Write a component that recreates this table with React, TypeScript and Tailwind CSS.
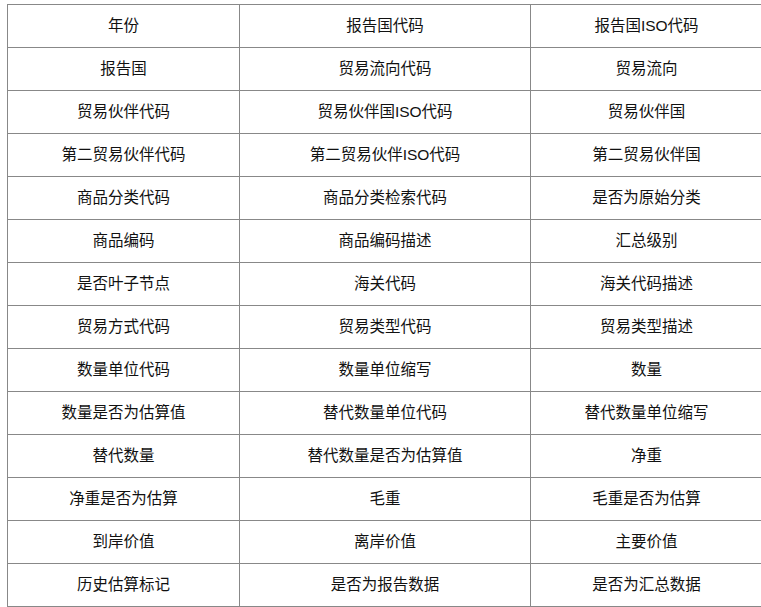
import React from "react";

const rows: string[][] = [
  ["年份", "报告国代码", "报告国ISO代码"],
  ["报告国", "贸易流向代码", "贸易流向"],
  ["贸易伙伴代码", "贸易伙伴国ISO代码", "贸易伙伴国"],
  ["第二贸易伙伴代码", "第二贸易伙伴ISO代码", "第二贸易伙伴国"],
  ["商品分类代码", "商品分类检索代码", "是否为原始分类"],
  ["商品编码", "商品编码描述", "汇总级别"],
  ["是否叶子节点", "海关代码", "海关代码描述"],
  ["贸易方式代码", "贸易类型代码", "贸易类型描述"],
  ["数量单位代码", "数量单位缩写", "数量"],
  ["数量是否为估算值", "替代数量单位代码", "替代数量单位缩写"],
  ["替代数量", "替代数量是否为估算值", "净重"],
  ["净重是否为估算", "毛重", "毛重是否为估算"],
  ["到岸价值", "离岸价值", "主要价值"],
  ["历史估算标记", "是否为报告数据", "是否为汇总数据"],
];

export default function App() {
  return (
    <div className="bg-white w-[761px] h-[607px] overflow-hidden pt-[4px] pl-[7px]">
      <table
        className="border-collapse table-fixed w-[755px] text-[15.5px] text-[#111]"
        style={{ fontFamily: '"Liberation Sans", "Noto Sans CJK SC", sans-serif' }}
      >
        <colgroup>
          <col className="w-[232px]" />
          <col className="w-[291px]" />
          <col className="w-[232px]" />
        </colgroup>
        <tbody>
          {rows.map((r, i) => (
            <tr key={i} className="h-[43px]">
              {r.map((c, j) => (
                <td key={j} className="border border-[#888] text-center align-middle p-0">
                  {c}
                </td>
              ))}
            </tr>
          ))}
        </tbody>
      </table>
    </div>
  );
}
